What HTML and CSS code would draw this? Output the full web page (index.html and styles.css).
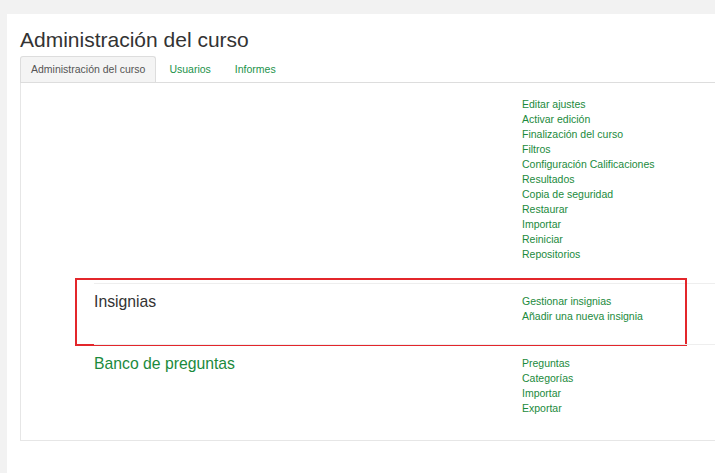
FILE: index.html
```html
<!DOCTYPE html>
<html lang="es">
<head>
<meta charset="utf-8">
<title>Administración del curso</title>
<link rel="stylesheet" href="styles.css">
</head>
<body>
<div class="page">
  <div class="card">
    <h2 class="title">Administración del curso</h2>
    <ul class="tabs">
      <li class="tab active"><span>Administración del curso</span></li>
      <li class="tab"><a href="#">Usuarios</a></li>
      <li class="tab"><a href="#">Informes</a></li>
    </ul>
    <div class="tab-content">
      <div class="row first">
        <div class="heading"></div>
        <ul class="links">
          <li><a href="#">Editar ajustes</a></li>
          <li><a href="#">Activar edición</a></li>
          <li><a href="#">Finalización del curso</a></li>
          <li><a href="#">Filtros</a></li>
          <li><a href="#">Configuración Calificaciones</a></li>
          <li><a href="#">Resultados</a></li>
          <li><a href="#">Copia de seguridad</a></li>
          <li><a href="#">Restaurar</a></li>
          <li><a href="#">Importar</a></li>
          <li><a href="#">Reiniciar</a></li>
          <li><a href="#">Repositorios</a></li>
        </ul>
      </div>
      <div class="row highlighted">
        <h3 class="heading">Insignias</h3>
        <ul class="links">
          <li><a href="#">Gestionar insignias</a></li>
          <li><a href="#">Añadir una nueva insignia</a></li>
        </ul>
        <div class="mark"></div>
      </div>
      <div class="row">
        <h3 class="heading"><a href="#">Banco de preguntas</a></h3>
        <ul class="links">
          <li><a href="#">Preguntas</a></li>
          <li><a href="#">Categorías</a></li>
          <li><a href="#">Importar</a></li>
          <li><a href="#">Exportar</a></li>
        </ul>
      </div>
    </div>
  </div>
</div>
</body>
</html>
```
FILE: styles.css
```css
html, body {
  margin: 0;
  padding: 0;
  overflow: hidden;
}
body {
  background: #f2f2f2;
  font-family: "Liberation Sans", Arial, sans-serif;
  font-size: 10.5px;
  line-height: 15px;
  color: #333;
}
a {
  color: #1b8a3c;
  text-decoration: none;
}
.page {
  padding: 14px 0 0 7px;
  height: 459px;
  overflow: hidden;
}
.card {
  background: #fff;
  padding: 13px 0 40px 13px;
  min-height: 480px;
}
.title {
  margin: 0 0 4px 0;
  font-size: 21px;
  line-height: 25px;
  font-weight: normal;
  color: #333;
}
.tabs {
  list-style: none;
  margin: 0;
  padding: 0;
  display: flex;
  border-bottom: 1px solid #ddd;
}
.tab {
  height: 25px;
  line-height: 25px;
  padding: 0 10px;
  border: 1px solid transparent;
  border-bottom: none;
  margin-right: 2px;
}
.tab.active {
  background: #f4f4f4;
  border-color: #ddd;
  border-radius: 3px 3px 0 0;
  color: #555;
}
.tab a {
  color: #22924a;
}
.tab-content {
  border-left: 1px solid #e6e6e6;
  border-bottom: 1px solid #e6e6e6;
  padding: 3px 0 4px 73px;
}
.row {
  position: relative;
  display: grid;
  grid-template-columns: 428px 1fr;
  padding: 10.5px 0 20px 0;
  border-top: 1px solid #eee;
}
.row.first {
  border-top: none;
  padding-bottom: 21px;
}
.heading {
  margin: -3px 0 0 0;
  font-size: 15.75px;
  line-height: 22.5px;
  font-weight: normal;
  color: #333;
}
.heading a {
  color: #1b8a3c;
}
.links {
  list-style: none;
  margin: 0;
  padding: 0;
}
.mark {
  position: absolute;
  left: -19px;
  top: -6px;
  width: 612px;
  height: 68px;
  box-sizing: border-box;
  border: 2px solid #e3262b;
  pointer-events: none;
}
```
